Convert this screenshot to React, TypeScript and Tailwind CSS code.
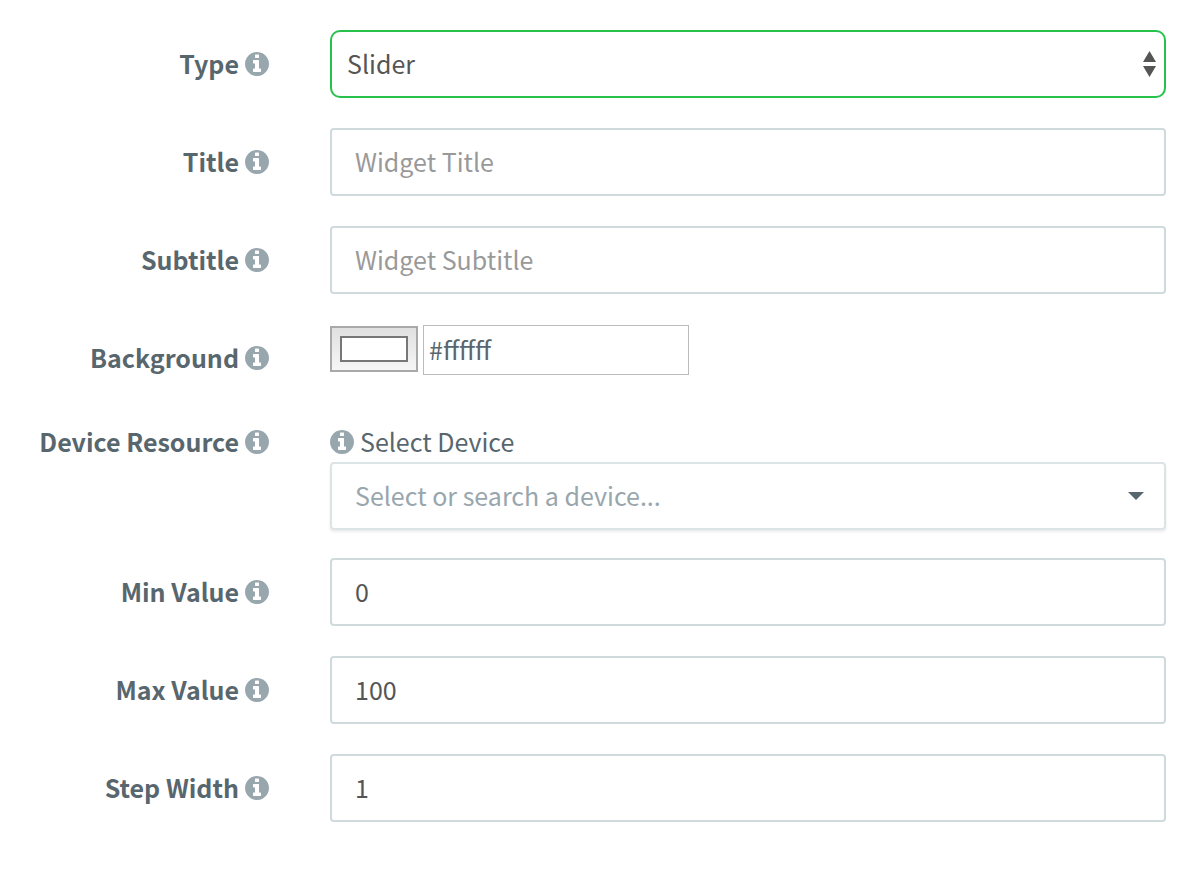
import { useState } from "react";
import type { ReactNode } from "react";

function InfoIcon() {
  return (
    <svg
      viewBox="0 128 1536 1536"
      className="size-6 shrink-0 fill-[#98a6ad]"
      aria-hidden="true"
    >
      <path d="M1024 1376v-160q0-14-9-23t-23-9h-96v-512q0-14-9-23t-23-9h-320q-14 0-23 9t-9 23v160q0 14 9 23t23 9h96v320h-96q-14 0-23 9t-9 23v160q0 14 9 23t23 9h448q14 0 23-9t9-23zm-128-896v-160q0-14-9-23t-23-9h-192q-14 0-23 9t-9 23v160q0 14 9 23t23 9h192q14 0 23-9t9-23zm640 416q0 209-103 385.5t-279.5 279.5-385.5 103-385.5-103-279.5-279.5-103-385.5 103-385.5 279.5-279.5 385.5-103 385.5 103 279.5 279.5 103 385.5z" />
    </svg>
  );
}

function Row({
  label,
  htmlFor,
  children,
}: {
  label: string;
  htmlFor: string;
  children: ReactNode;
}) {
  return (
    <div className="grid grid-cols-[300px_1fr] items-start">
      <label
        htmlFor={htmlFor}
        className="flex items-center justify-end gap-1.5 pt-3.5 pr-[61px] font-bold whitespace-nowrap"
      >
        <span className="pb-0.5 leading-[38px]">{label}</span>
        <InfoIcon />
      </label>
      <div className="min-w-0">{children}</div>
    </div>
  );
}

function TextField({
  id,
  label,
  placeholder,
  initial = "",
}: {
  id: string;
  label: string;
  placeholder?: string;
  initial?: string;
}) {
  const [value, setValue] = useState(initial);
  return (
    <Row label={label} htmlFor={id}>
      <input
        id={id}
        type="text"
        value={value}
        placeholder={placeholder}
        onChange={(e) => setValue(e.target.value)}
        className="block h-[68px] w-full rounded-sm border-2 border-[#cfdadd] bg-white px-[23px] pb-0.5 text-[#555] outline-none placeholder:text-[#999]"
      />
    </Row>
  );
}

export default function App() {
  const [color, setColor] = useState("#ffffff");

  return (
    <form className="flex flex-col gap-[30px] bg-white py-[30px] pr-[30px] pl-[30px] font-['Noto_Sans_CJK_SC','Source_Sans_Pro',sans-serif] text-[25px] text-[#58666e]">
      <Row label="Type" htmlFor="type">
        <div className="relative">
          <select
            id="type"
            defaultValue="Slider"
            className="block h-[68px] w-full appearance-none rounded-[10px] border-2 border-[#27c24c] bg-white px-[15px] text-[#555] outline-none"
          >
            <option>Slider</option>
          </select>
          <svg
            viewBox="0 0 13 26"
            className="pointer-events-none absolute top-[21px] right-[10px] h-[26px] w-[13px] fill-[#555]"
            aria-hidden="true"
          >
            <path d="M6.5 0L13 11H0zM0 15h13L6.5 26z" />
          </svg>
        </div>
      </Row>

      <TextField id="title" label="Title" placeholder="Widget Title" />
      <TextField id="subtitle" label="Subtitle" placeholder="Widget Subtitle" />

      <Row label="Background" htmlFor="background">
        <div className="flex items-start gap-[5px] pt-px">
          <input
            id="background"
            type="color"
            value={color}
            onChange={(e) => setColor(e.target.value)}
            className="mt-px h-[46px] w-[88px] appearance-none border-2 border-[#a9a9a9] bg-linear-to-b from-[#e0e0e0] to-[#f6f6f6] p-2 [&::-webkit-color-swatch]:rounded-none [&::-webkit-color-swatch]:border-2 [&::-webkit-color-swatch]:border-[#777] [&::-webkit-color-swatch-wrapper]:p-0"
          />
          <input
            type="text"
            aria-label="Background color value"
            value={color}
            onChange={(e) => setColor(e.target.value)}
            className="h-[50px] w-[266px] border border-[#bbb] bg-white px-[5px] pb-0.5 outline-none"
          />
        </div>
      </Row>

      <div className="-mb-0.5">
        <Row label="Device Resource" htmlFor="device">
          <label
            htmlFor="device"
            className="flex items-center gap-1.5 pt-3.5"
          >
            <InfoIcon />
            <span className="pb-0.5 leading-[38px]">Select Device</span>
          </label>
          <div className="relative">
            <select
              id="device"
              defaultValue=""
              className="block h-[68px] w-full appearance-none rounded-sm border-2 border-[#dce4e6] bg-white px-[23px] text-[#98a6ad] shadow-[0_2px_3px_rgba(0,0,0,0.08)] outline-none"
            >
              <option value="">Select or search a device...</option>
            </select>
            <svg
              viewBox="0 0 16 8"
              className="pointer-events-none absolute top-[30px] right-[22px] h-2 w-4 fill-[#58666e]"
              aria-hidden="true"
            >
              <path d="M0 0h16L8 8z" />
            </svg>
          </div>
        </Row>
      </div>

      <TextField id="min" label="Min Value" initial="0" />
      <TextField id="max" label="Max Value" initial="100" />
      <TextField id="step" label="Step Width" initial="1" />
    </form>
  );
}
